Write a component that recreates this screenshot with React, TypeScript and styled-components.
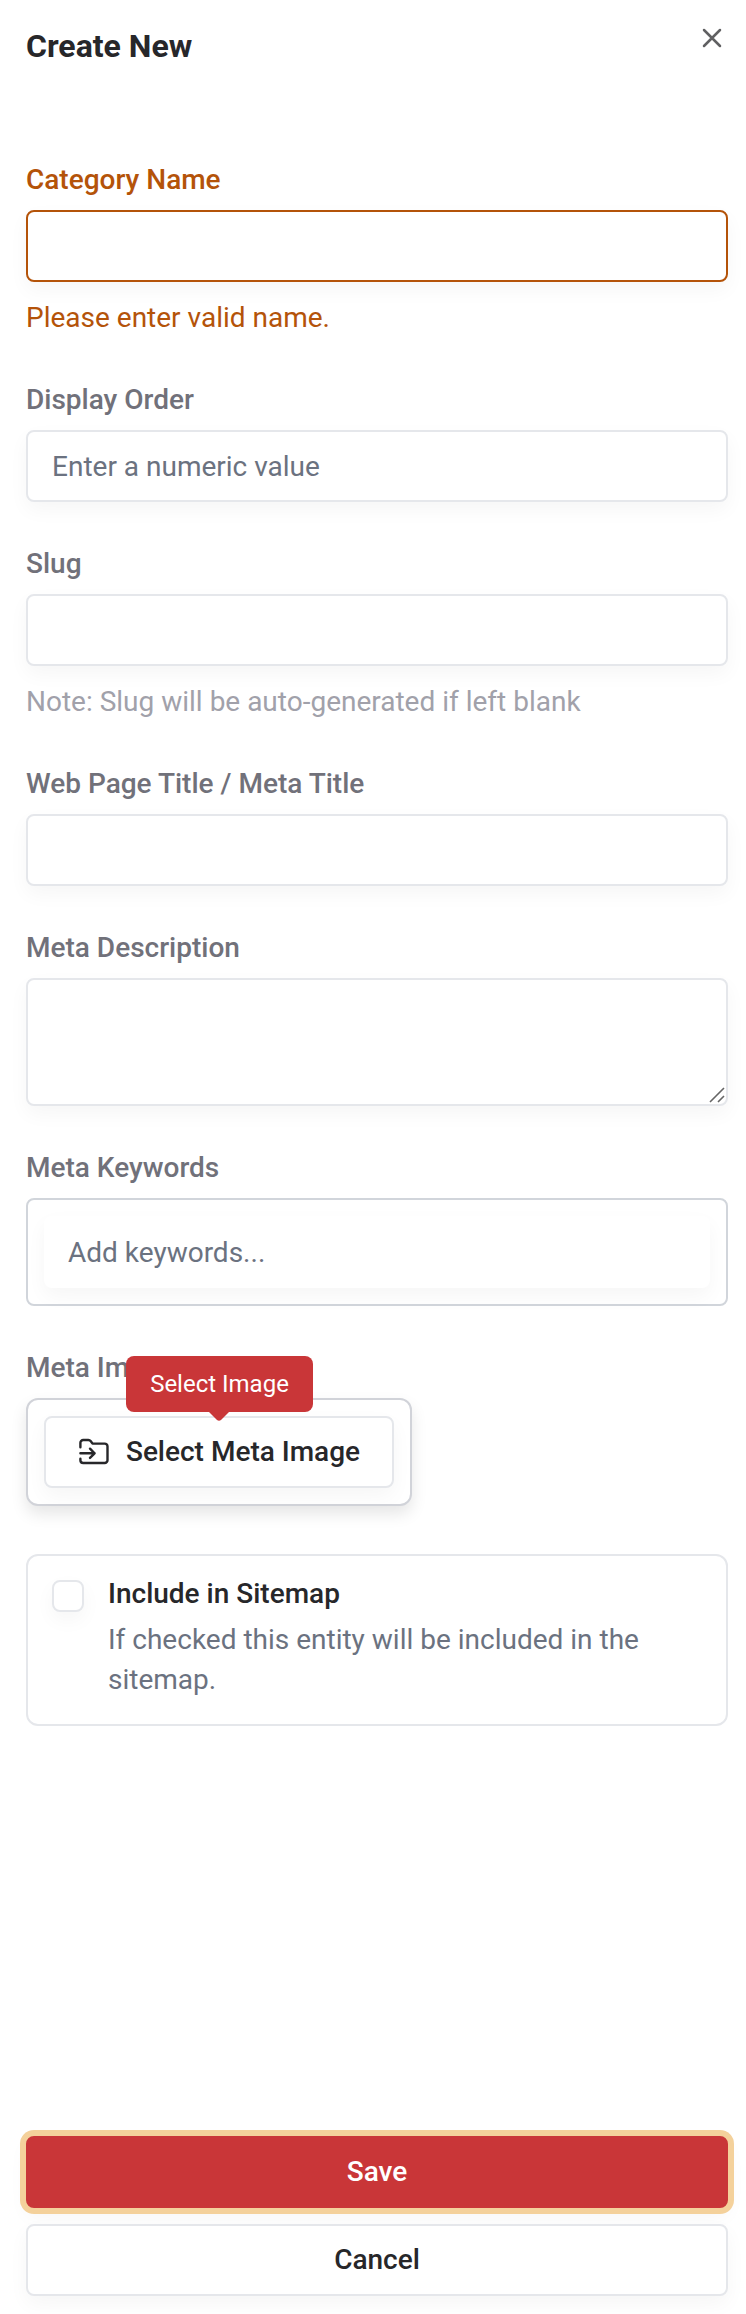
import React from "react";
import styled, { createGlobalStyle, css } from "styled-components";

const GlobalStyle = createGlobalStyle`
  *, *::before, *::after { box-sizing: border-box; }
  body { margin: 0; background: #fff; }
`;

const Panel = styled.form`
  display: flex;
  flex-direction: column;
  width: 746px;
  height: 2314px;
  padding: 0 18px 18px 26px;
  font-family: Roboto, "Liberation Sans", sans-serif;
  font-size: 28px;
  line-height: 40px;
  color: #27272a;
`;

const Header = styled.header`
  display: flex;
  justify-content: space-between;
  align-items: flex-start;
  height: 160px;
  padding-top: 22px;
`;

const Title = styled.h2`
  margin: 0;
  font-size: 32px;
  line-height: 48px;
  font-weight: 700;
  color: #27272a;
`;

const CloseButton = styled.button`
  display: flex;
  margin: 4px 4px 0 0;
  padding: 0;
  border: 0;
  background: none;
  color: #606062;
`;

const Fields = styled.div`
  display: flex;
  flex-direction: column;
  gap: 42px;
`;

const Field = styled.div`
  display: flex;
  flex-direction: column;
  align-items: stretch;
`;

const Label = styled.label<{ $invalid?: boolean }>`
  margin-bottom: 10px;
  font-weight: 500;
  color: ${(p) => (p.$invalid ? "#b45309" : "#71717a")};
`;

const softShadow = "0 8px 20px rgba(0, 0, 0, 0.04)";

const controlStyle = css<{ $invalid?: boolean }>`
  display: block;
  width: 100%;
  margin: 0;
  padding: 0 24px;
  border: 2px solid ${(p) => (p.$invalid ? "#b45309" : "#e5e7eb")};
  border-radius: 8px;
  outline: none;
  background: #fff;
  box-shadow: ${softShadow};
  font: inherit;
  color: #27272a;
  &::placeholder { color: #6b7280; opacity: 1; }
`;

const Input = styled.input<{ $invalid?: boolean }>`
  ${controlStyle}
  height: 72px;
`;

const TextAreaWrap = styled.div`
  position: relative;
`;

const TextArea = styled.textarea`
  ${controlStyle}
  height: 128px;
  resize: none;
`;

const Grip = styled.svg`
  position: absolute;
  right: 3px;
  bottom: 3px;
`;

const Hint = styled.p<{ $invalid?: boolean }>`
  margin: 16px 0 0;
  color: ${(p) => (p.$invalid ? "#b45309" : "#a1a1aa")};
`;

const KeywordsBox = styled.div`
  height: 108px;
  padding: 16px;
  border: 2px solid #d1d5db;
  border-radius: 8px;
  background: #fff;
`;

const KeywordsInput = styled(Input)`
  padding: 0 24px;
  border: 0;
`;

const ImageBox = styled.div`
  position: relative;
  align-self: flex-start;
  width: 386px;
  height: 108px;
  padding: 16px;
  border: 2px solid #d1d3d9;
  border-radius: 12px;
  background: #fff;
  box-shadow: 0 8px 16px rgba(0, 0, 0, 0.1);
`;

const Button = styled.button<{ $primary?: boolean }>`
  display: flex;
  align-items: center;
  justify-content: center;
  gap: 16px;
  flex: none;
  width: 100%;
  height: 72px;
  padding: 0;
  border: 2px solid ${(p) => (p.$primary ? "#c93638" : "#e5e7eb")};
  border-radius: 8px;
  background: ${(p) => (p.$primary ? "#c93638" : "#fff")};
  box-shadow: ${(p) => (p.$primary ? `0 0 0 6px #f4d19b, ${softShadow}` : softShadow)};
  font: inherit;
  font-weight: 500;
  color: ${(p) => (p.$primary ? "#fff" : "#27272a")};
`;

const Tooltip = styled.div`
  position: absolute;
  left: 98px;
  top: -44px;
  width: 187px;
  height: 56px;
  border-radius: 8px;
  background: #c93638;
  font-size: 24px;
  line-height: 56px;
  text-align: center;
  color: #fff;
`;

const TooltipArrow = styled.svg`
  position: absolute;
  left: 83px;
  top: 55px;
`;

const CheckCard = styled.label`
  display: flex;
  gap: 24px;
  height: 172px;
  margin-top: 6px;
  padding: 18px 24px;
  border: 2px solid #e5e7eb;
  border-radius: 12px;
  background: #fff;
`;

const Checkbox = styled.input`
  appearance: none;
  flex: none;
  width: 32px;
  height: 32px;
  margin: 6px 0 0;
  border: 2px solid #e5e7eb;
  border-radius: 8px;
  background: #fff;
  box-shadow: ${softShadow};
`;

const CheckText = styled.div`
  display: flex;
  flex-direction: column;
  gap: 6px;
`;

const CheckTitle = styled.span`
  font-weight: 500;
`;

const CheckNote = styled.span`
  color: #6b7280;
`;

const Actions = styled.footer`
  display: flex;
  flex-direction: column;
  gap: 16px;
  margin-top: auto;
`;

const FolderInputIcon = () => (
  <svg width="32" height="32" viewBox="0 0 32 32" fill="none" stroke="currentColor" strokeWidth="2.4" strokeLinecap="round" strokeLinejoin="round">
    <path d="M2.4 11.2V6.8a2.8 2.8 0 0 1 2.8-2.8h5.2a2.8 2.8 0 0 1 2.2 1.1l1.9 2.5h12.2a2.8 2.8 0 0 1 2.8 2.8v13.8a2.8 2.8 0 0 1-2.8 2.8H5.2a2.8 2.8 0 0 1-2.8-2.8v-1.4" />
    <path d="M2.4 17.3h14.2M12 12.7l4.6 4.6-4.6 4.6" />
  </svg>
);

export default function App() {
  return (
    <Panel>
      <GlobalStyle />
      <Header>
        <Title>Create New</Title>
        <CloseButton type="button" aria-label="Close">
          <svg width="24" height="24" viewBox="0 0 24 24" fill="none" stroke="currentColor" strokeWidth="2.5" strokeLinecap="round">
            <path d="M4 4l16 16M20 4L4 20" />
          </svg>
        </CloseButton>
      </Header>
      <Fields>
        <Field>
          <Label $invalid>Category Name</Label>
          <Input $invalid />
          <Hint $invalid>Please enter valid name.</Hint>
        </Field>
        <Field>
          <Label>Display Order</Label>
          <Input placeholder="Enter a numeric value" />
        </Field>
        <Field>
          <Label>Slug</Label>
          <Input />
          <Hint>Note: Slug will be auto-generated if left blank</Hint>
        </Field>
        <Field>
          <Label>Web Page Title / Meta Title</Label>
          <Input />
        </Field>
        <Field>
          <Label>Meta Description</Label>
          <TextAreaWrap>
            <TextArea />
            <Grip width="16" height="16" viewBox="0 0 16 16" stroke="#666" strokeWidth="1.6">
              <path d="M1 15L15 1M9 15l6-6" />
            </Grip>
          </TextAreaWrap>
        </Field>
        <Field>
          <Label>Meta Keywords</Label>
          <KeywordsBox>
            <KeywordsInput placeholder="Add keywords..." />
          </KeywordsBox>
        </Field>
        <Field>
          <Label>Meta Image</Label>
          <ImageBox>
            <Button type="button">
              <FolderInputIcon />
              Select Meta Image
            </Button>
            <Tooltip>
              Select Image
              <TooltipArrow width="20" height="10" viewBox="0 0 20 10" fill="#c93638">
                <path d="M0 0h20v1l-8 8q-2 1.6-4 0L0 1z" />
              </TooltipArrow>
            </Tooltip>
          </ImageBox>
        </Field>
        <CheckCard>
          <Checkbox type="checkbox" />
          <CheckText>
            <CheckTitle>Include in Sitemap</CheckTitle>
            <CheckNote>If checked this entity will be included in the sitemap.</CheckNote>
          </CheckText>
        </CheckCard>
      </Fields>
      <Actions>
        <Button type="submit" $primary>Save</Button>
        <Button type="button">Cancel</Button>
      </Actions>
    </Panel>
  );
}
